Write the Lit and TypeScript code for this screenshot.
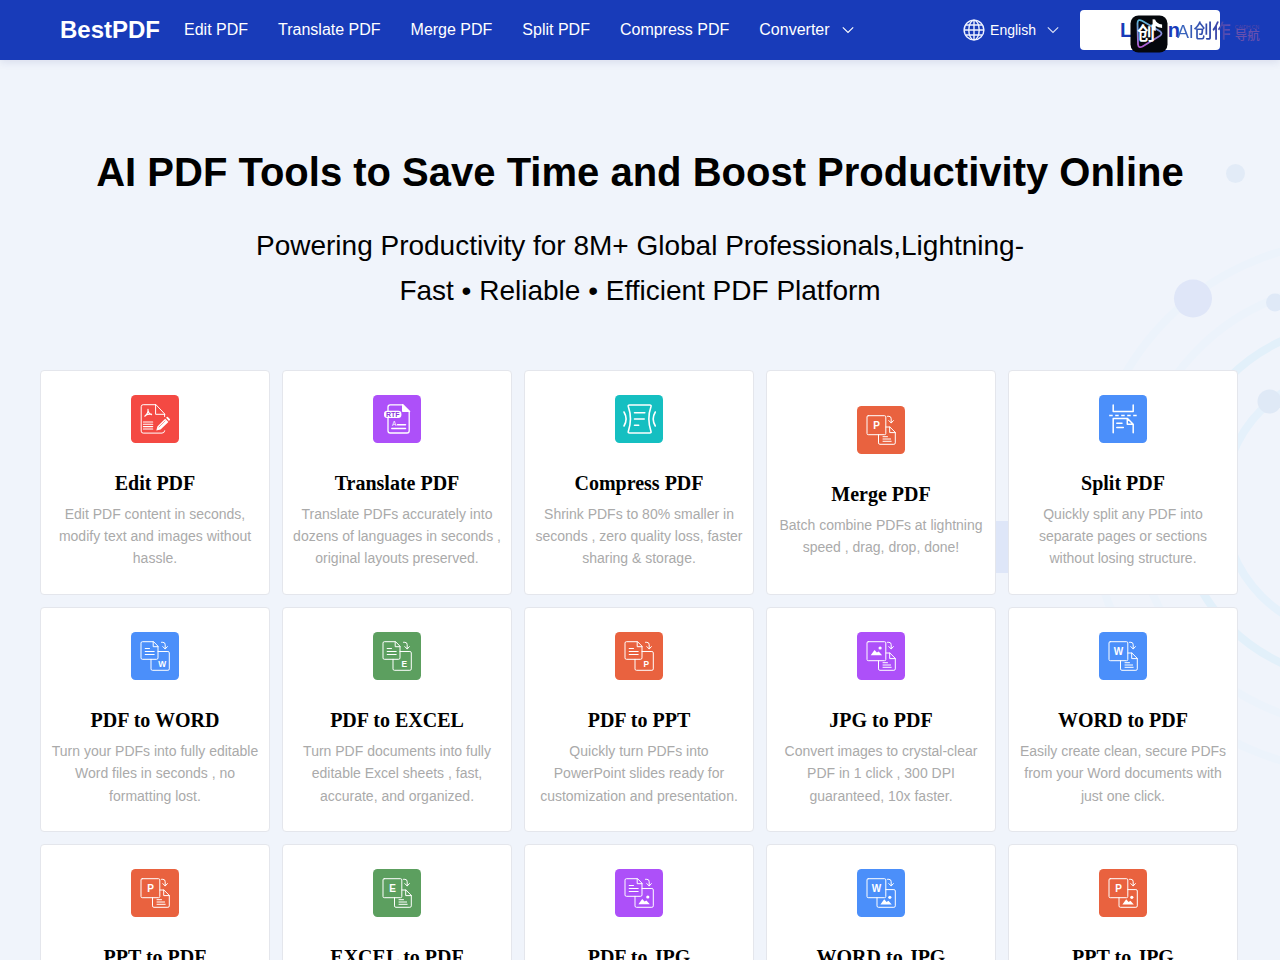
import { LitElement, html, css, svg } from "lit";
import { customElement } from "lit/decorators.js";

const RED = "#f44943";
const PURPLE = "#ad50f9";
const TEAL = "#15bfc1";
const ORANGE = "#e9623f";
const BLUE = "#4b8ffa";
const GREEN = "#5c9f5f";

const letter = (ch: string, x: number, y: number, size: number) =>
  svg`<text x=${x} y=${y} font-size=${size} font-family="Liberation Sans, sans-serif" font-weight="700" text-anchor="middle" fill="#fff" stroke="none">${ch}</text>`;

const arrow = svg`<path d="M30.5 10.3h1.400q2.300 0 2.300 2.500v4M31.800 14.600l2.400 2.400 2.200-2.400"/>`;

// Converter glyph whose front sheet is a letter or picture tile
const frontTile = svg`<rect x="10" y="9.7" width="18.8" height="19" rx="1.2"/>`;
const backDoc = svg`<path d="M21.5 28.7v8.2q0 1.4 1.4 1.4h14q1.4 0 1.4-1.4V26.4l-5.4-5.4h-4M32.7 21v5.6h5.6M26 30.700h4.500M26 33h7.600M26 35.300h8.200"/>`;
const frontDoc = svg`<path d="M22.2 9.7H11.4Q10 9.7 10 11.1v14.8q0 1.4 1.4 1.4h14.2q1.4 0 1.4-1.4V14.6zM22.2 9.7v5h4.8M14.2 16.5h4.3M14.2 19.5h9M14.2 22.5h9"/>`;
const backTile = svg`<path d="M27 19.5h9.9q1.4 0 1.4 1.4v16q0 1.4-1.4 1.4H21.4q-1.4 0-1.4-1.4v-9.6"/>`;
const backTileBelowTile = svg`<path d="M28.8 20.6h8.1q1.4 0 1.4 1.4v14.9q0 1.4-1.4 1.4H21.4q-1.4 0-1.4-1.4v-8.2"/>`;
const picture = (x: number, y: number) =>
  svg`<g transform="translate(${x} ${y})" fill="#fff" stroke="none"><path d="M0 7.2 3.8 1.9 6.2 4.600 8 3.500 11.400 7.200z"/><circle cx="9.4" cy="0" r="1.600"/></g>`;

const toPdf = (ch: string) => svg`${frontTile}${letter(ch, 19.6, 23.1, 10)}${arrow}${backDoc}`;
const fromPdf = (ch: string) => svg`${frontDoc}${backTile}${letter(ch, 31.2, 35, 8.4)}${arrow}`;
const toJpg = (ch: string) => svg`${frontTile}${letter(ch, 19.6, 23.1, 10)}${arrow}${backTileBelowTile}${picture(23.4, 28.3)}`;

const glyphs: Record<string, unknown> = {
  edit: svg`
    <path d="M24.4 9.7H12.2q-2 0-2 2v24.4q0 2 2 2H31q2.4 0 2.7-2.3M24.6 9.7v9.6h9zM33.6 19.3v2.2"/>
    <path d="M12.4 27h9.3M12.4 29.3h9.3M12.4 31.6h9.3M12.4 34h9.3" stroke-width="1.1"/>
    <path d="M17 14.300q.6 3.500-3.200 6.900M17 15.500q.5 3.300 3.600 4.200M14.300 20.400q2.500-1.500 6-1.200" stroke-width="1.200"/>
    <path d="m25.300 35.600 1.100-4.100 7.800-7.800 3.200 3.200-7.800 7.700zM35.100 22.800l.7-.7q.7-.5 1.300.1l1.700 1.700q.6.6 0 1.200l-.8.800z" fill="#fff" stroke="none"/>
    <path d="m28 32 6.100-6" stroke="#f44943" stroke-width=".6"/>`,
  translate: svg`
    <path d="M15 16V12q0-2.200 2.200-2.200h12.500l6.500 6.500v19.500q0 2.200-2.200 2.200H17.200Q15 38 15 35.800V23" stroke-width="1.300"/>
    <path d="M29.500 9.500v7h7z" fill="#fff"/>
    <rect x="11" y="15.700" width="17.400" height="7.200" rx="3.200" fill="#fff" stroke="none"/>
    <text x="19.700" y="21.900" font-family="Liberation Sans, sans-serif" font-size="7" font-weight="700" text-anchor="middle" textLength="13.600" lengthAdjust="spacingAndGlyphs" fill="#8a35dc" stroke="none">RTF</text>
    <text x="21.200" y="30.500" font-family="Liberation Sans, sans-serif" font-size="6.500" text-anchor="middle" fill="#fff" stroke="none">A</text>
    <path d="M24.500 29.700h8M18.800 33.600h13.700" stroke-width="1.500"/>`,
  compress: svg`
    <g stroke-width="1.600"><path d="M14.500 10h20.300q1.700 0 1.200 1.600-4.300 12.400 0 24.800.5 1.600-1.200 1.600H14.500q-1.700 0-1.200-1.600 4.300-12.400 0-24.800Q12.800 10 14.500 10z"/>
    <path d="M9 17q4.200 7 0 14M40.300 17q-4.200 7 0 14M19.500 17.700h10.300M19.500 24h9.700M19.500 30.300h4.200"/></g>`,
  split: svg`
    <g stroke-width="1.500"><path d="M14.200 10v6.500h20V10M14.200 37.700V23.500h14.300l5.700 5.700v8.500M28.300 23.500v5.700h5.700M17.800 28.300H23M17.800 32.600h6.500"/>
    <path d="M10.200 20.500h28" stroke-dasharray="3.500 2.500" stroke-linecap="butt"/></g>`,
  mergeP: toPdf("P"),
  pdfW: fromPdf("W"),
  pdfE: fromPdf("E"),
  pdfP: fromPdf("P"),
  jpgPdf: svg`${frontTile}${picture(13.700, 16)}${arrow}${backDoc}`,
  wPdf: toPdf("W"),
  pPdf: toPdf("P"),
  ePdf: toPdf("E"),
  pdfJpg: svg`${frontDoc}${backTile}${picture(23.400, 28)}${arrow}`,
  wJpg: toJpg("W"),
  pJpg: toJpg("P"),
};

interface Tool {
  title: string;
  text: string[];
  icon: string;
  color: string;
}

const tools: Tool[] = [
  { title: "Edit PDF", icon: "edit", color: RED, text: ["Edit PDF content in seconds,", "modify text and images without", "hassle."] },
  { title: "Translate PDF", icon: "translate", color: PURPLE, text: ["Translate PDFs accurately into", "dozens of languages in seconds ,", "original layouts preserved."] },
  { title: "Compress PDF", icon: "compress", color: TEAL, text: ["Shrink PDFs to 80% smaller in", "seconds , zero quality loss, faster", "sharing & storage."] },
  { title: "Merge PDF", icon: "mergeP", color: ORANGE, text: ["Batch combine PDFs at lightning", "speed , drag, drop, done!"] },
  { title: "Split PDF", icon: "split", color: BLUE, text: ["Quickly split any PDF into", "separate pages or sections", "without losing structure."] },
  { title: "PDF to WORD", icon: "pdfW", color: BLUE, text: ["Turn your PDFs into fully editable", "Word files in seconds , no", "formatting lost."] },
  { title: "PDF to EXCEL", icon: "pdfE", color: GREEN, text: ["Turn PDF documents into fully", "editable Excel sheets , fast,", "accurate, and organized."] },
  { title: "PDF to PPT", icon: "pdfP", color: ORANGE, text: ["Quickly turn PDFs into", "PowerPoint slides ready for", "customization and presentation."] },
  { title: "JPG to PDF", icon: "jpgPdf", color: PURPLE, text: ["Convert images to crystal-clear", "PDF in 1 click , 300 DPI", "guaranteed, 10x faster."] },
  { title: "WORD to PDF", icon: "wPdf", color: BLUE, text: ["Easily create clean, secure PDFs", "from your Word documents with", "just one click."] },
  { title: "PPT to PDF", icon: "pPdf", color: ORANGE, text: [] },
  { title: "EXCEL to PDF", icon: "ePdf", color: GREEN, text: [] },
  { title: "PDF to JPG", icon: "pdfJpg", color: PURPLE, text: [] },
  { title: "WORD to JPG", icon: "wJpg", color: BLUE, text: [] },
  { title: "PPT to JPG", icon: "pJpg", color: ORANGE, text: [] },
];

@customElement("tool-card")
class ToolCard extends LitElement {
  static properties = { tool: { attribute: false } };
  declare tool: Tool;

  static styles = css`
    :host {
      display: flex;
      flex-direction: column;
      align-items: center;
      justify-content: center;
      box-sizing: border-box;
      height: 225.2px;
      background: #fff;
      border: 1px solid #e4e6ec;
      border-radius: 4px;
      text-align: center;
    }
    :host([cut]) { justify-content: flex-start; padding-top: 24px; }
    .icon { display: block; width: 48px; height: 48px; flex: none; }
    .title {
      margin: 25px 0 5px;
      font: 700 20px/30px "Liberation Serif", serif;
      color: #000;
    }
    .text {
      margin: 0;
      font: 14px/22.4px "Liberation Sans", sans-serif;
      color: #aaa;
      white-space: nowrap;
    }
  `;

  render() {
    const t = this.tool;
    return html`
      <svg class="icon" viewBox="0 0 48 48" fill="none" stroke="#fff" stroke-width="1" stroke-linejoin="round" stroke-linecap="round">
        <rect width="48" height="48" rx="4.500" fill=${t.color} stroke="none"></rect>
        ${glyphs[t.icon]}
      </svg>
      <h3 class="title">${t.title}</h3>
      <p class="text">${t.text.map((line, i) => (i ? html`<br />${line}` : line))}</p>
    `;
  }
}

@customElement("app-root")
class AppRoot extends LitElement {
  static styles = css`
    :host {
      display: block;
      position: relative;
      height: 960px;
      overflow: hidden;
      background: #f0f4fb;
      font-family: "Liberation Sans", sans-serif;
    }
    .backdrop { position: absolute; inset: 0; width: 1280px; height: 960px; }
    .bar {
      position: relative;
      display: flex;
      align-items: center;
      box-sizing: border-box;
      height: 60px;
      padding: 0 60px;
      background: #183bb9;
      color: #fff;
      box-shadow: 0 2px 8px rgba(40, 60, 130, 0.12);
    }
    .brand { font-size: 24px; font-weight: 700; width: 124px; }
    .nav { display: flex; gap: 30px; font-size: 16px; white-space: nowrap; }
    .item { display: flex; align-items: center; gap: 12px; }
    .lang { display: flex; align-items: center; margin-left: auto; font-size: 14px; }
    .globe { width: 22px; height: 22px; margin-right: 5px; }
    .caret { width: 12px; height: 8px; }
    .lang .caret { margin: 0 21px 0 11px; opacity: 0.85; }
    .login {
      width: 140px;
      height: 40px;
      border-radius: 4px;
      background: #fff;
      color: #183bb9;
      font-size: 20px;
      font-weight: 700;
      line-height: 40px;
      text-align: center;
    }
    .mark {
      position: absolute;
      left: 1130px;
      top: 15px;
      display: flex;
      align-items: center;
      font-family: "Liberation Sans", "Noto Sans CJK SC", sans-serif;
    }
    .badge { width: 38px; height: 38px; }
    .name {
      margin: -4px 0 0 9px;
      font-size: 18px;
      line-height: 34px;
      letter-spacing: -0.3px;
      white-space: nowrap;
      background: linear-gradient(90deg, #3d6cc2, #2d42a6 65%, #6550b4);
      -webkit-background-clip: text;
      color: transparent;
    }
    .cjk { font-size: 19px; font-weight: 500; }
    .side { margin: -1px 0 0 4px; display: flex; flex-direction: column; color: #6650ae; font-size: 12.5px; line-height: 13px; font-weight: 500; }
    .site { font-size: 5px; line-height: 5px; color: #5a48a8; }
    .hero { position: relative; text-align: center; color: #000; }
    .headline { margin: 0; padding-top: 82px; font-size: 40px; line-height: 60px; white-space: nowrap; }
    .lead { margin: 21px 0 0; font-size: 28px; line-height: 45px; }
    .grid {
      position: relative;
      display: grid;
      grid-template-columns: repeat(5, 230px);
      gap: 12px;
      padding: 56.6px 40px 0;
    }
  `;

  private caret() {
    return html`<svg class="caret" viewBox="0 0 12 8" fill="none" stroke="#fff" stroke-width="1.100"><path d="M.8 1.300 6 6.500l5.200-5.200" /></svg>`;
  }

  render() {
    return html`
      <svg class="backdrop" viewBox="0 0 1280 960" fill="none">
        <g stroke-width="8">
          <circle cx="1355" cy="506" r="265" stroke="#ecf3fb" />
          <circle cx="1355" cy="505" r="221" stroke="#ecf3fb" />
          <circle cx="1355" cy="502" r="177" stroke="#e2f0fa" />
          <circle cx="1355" cy="503" r="132" stroke="#e5f1fb" />
        </g>
        <circle cx="1235.500" cy="173.500" r="9.500" fill="#e2ebf7" />
        <circle cx="1193" cy="298.500" r="19" fill="#dfe6f8" />
        <circle cx="1275" cy="302.500" r="9" fill="#dfe9f7" />
        <circle cx="1269.500" cy="401.500" r="12" fill="#dfe9f6" />
        <rect x="960" y="521" width="52" height="52" fill="#dee6f8" />
      </svg>
      <header class="bar">
        <div class="brand">BestPDF</div>
        <nav class="nav">
          ${["Edit PDF", "Translate PDF", "Merge PDF", "Split PDF", "Compress PDF"].map((n) => html`<span>${n}</span>`)}
          <span class="item">Converter ${this.caret()}</span>
        </nav>
        <div class="lang">
          <svg class="globe" viewBox="0 0 22 22" fill="none" stroke="#eef2ff" stroke-width="1.400">
            <circle cx="11" cy="11" r="9.900" /><ellipse cx="11" cy="11" rx="5.200" ry="9.900" />
            <path d="M11 1v20M1 11h20M2.600 6h16.800M2.600 16h16.800" />
          </svg>
          English ${this.caret()}
        </div>
        <div class="login">Log in</div>
        <div class="mark">
          <svg class="badge" viewBox="0 0 38 38">
            <defs>
              <linearGradient id="edge" x1="0" y1="0" x2="0" y2="1">
                <stop offset="0" stop-color="#5cb8d8" /><stop offset="1" stop-color="#b45ad4" />
              </linearGradient>
            </defs>
            <rect x=".5" y=".5" width="37" height="37" rx="8" fill="#05070c" />
            <path d="M7.500 8.500q0-5 4.500-2.700l18 10.500q3 2.200 0 4.400L12.500 31.500q-4 2-4.500-2z" fill="none" stroke="url(#edge)" stroke-width="1.800" />
            <path d="M22.600 15V4.200l2.500.2q1.300 4.200 7 5v3.600q-4.200-.3-6.400-2V16z" fill="#fff" />
            <text x="16" y="25" font-size="18" font-weight="700" text-anchor="middle" fill="#fff" font-family="Noto Sans CJK SC, sans-serif">创</text>
          </svg>
          <span class="name">AI<span class="cjk">创作</span></span>
          <span class="side"><span class="site">CAIDH.CN</span>导航</span>
        </div>
      </header>
      <section class="hero">
        <h1 class="headline">AI PDF Tools to Save Time and Boost Productivity Online</h1>
        <p class="lead">Powering Productivity for 8M+ Global Professionals,Lightning-<br />Fast • Reliable • Efficient PDF Platform</p>
      </section>
      <main class="grid">
        ${tools.map((t) => html`<tool-card .tool=${t} ?cut=${!t.text.length}></tool-card>`)}
      </main>
    `;
  }
}
